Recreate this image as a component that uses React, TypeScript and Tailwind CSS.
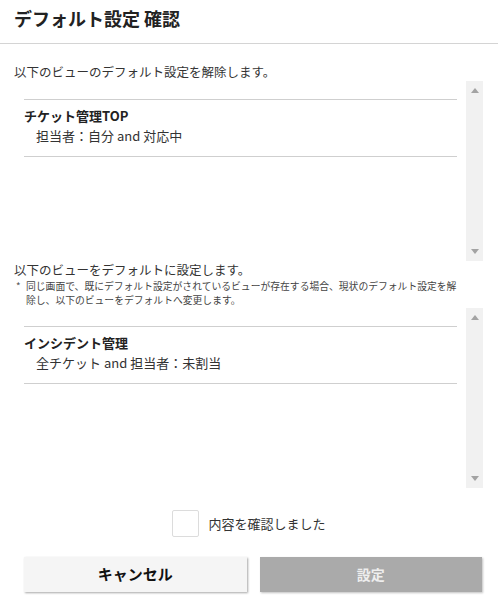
import { useState } from 'react';

interface ViewItem {
  title: string;
  condition: string;
}

const font = { fontFamily: '"Noto Sans CJK JP", "Noto Sans", sans-serif' };

function FakeScrollbar() {
  return (
    <div className="w-[17px] h-full bg-[#f1f1f1] flex flex-col items-center justify-between py-[7px]">
      <svg width="8" height="5" viewBox="0 0 8 5">
        <path d="M0 5 L4 0 L8 5 Z" fill="#a3a3a3" />
      </svg>
      <svg width="8" height="5" viewBox="0 0 8 5">
        <path d="M0 0 L8 0 L4 5 Z" fill="#a3a3a3" />
      </svg>
    </div>
  );
}

function ViewList({ items }: { items: ViewItem[] }) {
  return (
    <div className="flex h-[180px]">
      <div className="flex-1 pl-[10px] pr-[9px] pt-[18px]">
        {items.map((it) => (
          <div key={it.title} className="border-t border-b border-[#cfcfcf] pt-[7px] pb-[9px]">
            <div className="text-[13px] leading-[18px] font-bold text-[#222]">{it.title}</div>
            <div className="text-[13px] leading-[22px] pl-[12px] text-[#333]">{it.condition}</div>
          </div>
        ))}
      </div>
      <FakeScrollbar />
    </div>
  );
}

function App() {
  const [checked, setChecked] = useState(false);

  return (
    <div className="w-[498px] h-[611px] bg-white text-[#333]" style={font}>
      {/* ヘッダー */}
      <div className="h-[44px] flex items-center px-[14px] pb-[6px] border-b border-[#d4d4d4]">
        <h1 className="text-[18px] font-bold text-[#222]">デフォルト設定 確認</h1>
      </div>

      <div className="pl-[14px] pr-[15px]">
        <p className="mt-[19px] text-[12.5px] leading-[18px]">以下のビューのデフォルト設定を解除します。</p>
        <ViewList items={[{ title: 'チケット管理TOP', condition: '担当者：自分 and 対応中' }]} />

        <p className="text-[12.5px] leading-[18px]">以下のビューをデフォルトに設定します。</p>
        <div className="flex pl-[2px] text-[9.8px] leading-[14px] text-[#444]">
          <span className="w-[10px] shrink-0 text-[#555]">*</span>
          <p className="w-[436px]">
            同じ画面で、既にデフォルト設定がされているビューが存在する場合、現状のデフォルト設定を解除し、以下のビューをデフォルトへ変更します。
          </p>
        </div>
        <div className="mt-[1px]">
          <ViewList items={[{ title: 'インシデント管理', condition: '全チケット and 担当者：未割当' }]} />
        </div>
      </div>

      {/* 確認チェック */}
      <label className="mt-[22px] flex items-center justify-center gap-[9px] cursor-pointer">
        <span
          onClick={() => setChecked(!checked)}
          className="w-[27px] h-[27px] border border-[#dcdcdc] rounded-[2px] bg-white flex items-center justify-center"
        >
          {checked && (
            <svg width="14" height="14" viewBox="0 0 14 14">
              <path d="M2 7 L6 11 L12 3" stroke="#333" strokeWidth="2" fill="none" />
            </svg>
          )}
        </span>
        <span className="text-[13px] text-[#333]">内容を確認しました</span>
      </label>

      {/* ボタン */}
      <div className="mt-[20px] flex gap-[13px] pl-[24px] pr-[16px]">
        <button className="flex-1 h-[35px] bg-[#f5f5f5] text-[15px] font-bold text-[#111] shadow-[1px_1px_2px_rgba(0,0,0,0.35)]">
          キャンセル
        </button>
        <button
          disabled={!checked}
          className="flex-1 h-[35px] bg-[#aaaaaa] text-[14px] font-bold text-[#eeeeee] shadow-[1px_1px_2px_rgba(0,0,0,0.25)]"
        >
          設定
        </button>
      </div>
    </div>
  );
}

export default App;
